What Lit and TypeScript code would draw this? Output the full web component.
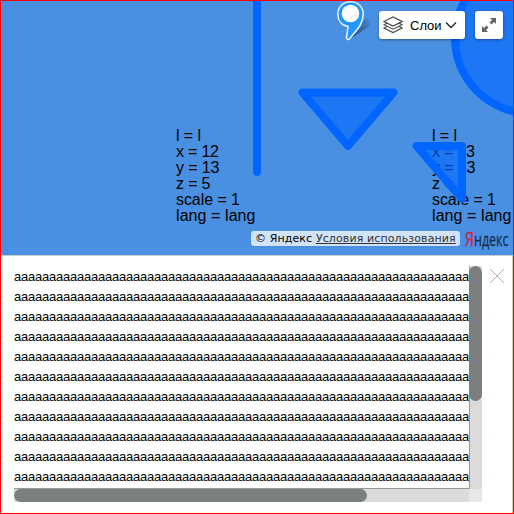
import { LitElement, html, css, svg } from "lit";
import { customElement } from "lit/decorators.js";

const TILES = [
  { left: 176, column: 12 },
  { left: 432, column: 13 },
];

const tileLines = (column: number): [string, number][] => [
  ["l = l", 25],
  [`x = ${column}`, 43],
  ["y = 13", 43.5],
  ["z = 5", 34.5],
  ["scale = 1", 64],
  ["lang = lang", 79.5],
];

@customElement("map-canvas")
class MapCanvas extends LitElement {
  static styles = css`
    :host { display: block; }
    svg { display: block; }
    .tile { font: 16px "Liberation Sans", Arial, sans-serif; fill: #000; }
    .shape { fill: #0066ff; fill-opacity: 0.6; stroke: #0066ff; stroke-width: 8; stroke-linejoin: round; stroke-linecap: round; }
  `;
  render() {
    return html`<svg width="512" height="254" viewBox="1 1 512 254">
      <defs>
        <linearGradient id="shade" x1="0" y1="1" x2="1" y2="0">
          <stop offset="0" stop-color="#17375e" stop-opacity=".8" />
          <stop offset="1" stop-color="#17375e" stop-opacity=".1" />
        </linearGradient>
      </defs>
      ${TILES.map((t) =>
        tileLines(t.column).map(([line, width], i) => svg`<text class="tile" x=${t.left} y=${141 + i * 16} textLength=${width}>${line}</text>`)
      )}
      <path class="shape" d="M257 -10V172" />
      <path class="shape" d="M302.500 92.500H393.500L348 146Z" />
      <path class="shape" d="M416.500 146H462V199Z" />
      <circle class="shape" cx="530" cy="38" r="75" />
      <path d="M350 39L361 20L367 19Q374 23 367 28Z" fill="url(#shade)" />
      <path d="M350.500 1.800C357.700 1.800 363.200 7 363.200 14C363.200 25 355.500 31 349.800 38.600Q347 40.800 346.500 37.500L348 26.500C341.500 25.500 337.800 20.500 337.800 14C337.800 7 343.300 1.800 350.500 1.800Z" fill="#1e98ff" stroke="#e4effb" stroke-width="1.600" />
      <circle cx="350.500" cy="13.500" r="8.800" fill="#fff" />
    </svg>`;
  }
}

@customElement("map-toolbar")
class MapToolbar extends LitElement {
  static styles = css`
    :host { display: flex; gap: 10px; }
    .btn { box-sizing: border-box; height: 28px; background: #fff; border-radius: 3px; display: flex; align-items: center; box-shadow: 0 1px 3px rgba(0, 0, 0, 0.35); font: 13px "Liberation Sans", Arial, sans-serif; color: #000; }
    .layers { width: 86px; padding-left: 4px; }
    .full { width: 28px; justify-content: center; }
    .label { width: 35px; margin: 1px 0 0 7px; }
    svg { display: block; flex: none; }
  `;
  render() {
    return html`<div class="btn layers">
        <svg width="20" height="18" viewBox="0 0 20 18" fill="#fff" stroke="#4d4d4d" stroke-width="1.200">
          <path d="M1 12L10 7.500L19 12L10 16.500Z" />
          <path d="M1 8.700L10 4.200L19 8.700L10 13.200Z" />
          <path d="M1 5.500L10 1L19 5.500L10 10Z" />
        </svg>
        <span class="label">Слои</span>
        <svg width="12" height="8" viewBox="0 0 12 8" fill="none" stroke="#222" stroke-width="1.300"><path d="M1 1.500L6 6.500L11 1.500" /></svg>
      </div>
      <div class="btn full">
        <svg width="16" height="16" viewBox="0 0 16 16" fill="#666">
          <path d="M9 1H15V7L13 5L10.500 7.500L8.500 5.500L11 3Z" />
          <path d="M7 15H1V9L3 11L5.500 8.500L7.500 10.500L5 13Z" />
        </svg>
      </div>`;
  }
}

@customElement("balloon-panel")
class BalloonPanel extends LitElement {
  static styles = css`
    :host { box-sizing: border-box; display: grid; grid-template-columns: 468px 1fr; padding: 10px 8px 11px 13px; background: #fff; border-right: 1px solid #ccc; border-bottom: 1px solid #ccc; border-top: 1px solid #ccc; }
    .scroll { display: grid; grid-template-columns: 455px 13px; grid-template-rows: 223px 13px; }
    .text { box-sizing: border-box; overflow: hidden; padding-top: 1px; border-bottom: 1px solid #999; font: 13px/20px "Liberation Sans", Arial, sans-serif; letter-spacing: -0.23px; color: #000; white-space: nowrap; }
    .v, .h { background: #dbdbdb; }
    .v { border-left: 1px solid #999; }
    .thumb { background: #7b7f7f; border-radius: 7px; }
    .v .thumb { height: 135px; margin-left: -1px; }
    .h .thumb { height: 13px; width: 353px; }
    .corner { background: #e8e8e8; }
    .close { display: block; margin: 3px 0 0 8px; }
  `;
  render() {
    return html`<div class="scroll">
        <div class="text">${Array.from({ length: 11 }, () => html`<div>${"a".repeat(65)}</div>`)}</div>
        <div class="v"><div class="thumb"></div></div>
        <div class="h"><div class="thumb"></div></div>
        <div class="corner"></div>
      </div>
      <svg class="close" width="14" height="14" viewBox="0 0 14 14" fill="none" stroke="#b2b2b2"><path d="M0 0L14 14M14 0L0 14" /></svg>`;
  }
}

@customElement("app-root")
class AppRoot extends LitElement {
  static styles = css`
    :host { box-sizing: border-box; display: flex; flex-direction: column; width: 514px; height: 514px; border: 1px solid #f00; overflow: hidden; background: #fff; }
    .map { position: relative; height: 254px; flex: none; background: #4a90e2; }
    balloon-panel { flex: 1; }
    .tools { position: absolute; top: 10px; right: 10px; }
    .copy { position: absolute; right: 4px; top: 230px; display: flex; align-items: flex-start; gap: 5px; }
    .terms { box-sizing: border-box; width: 209px; height: 15px; padding: 0 4px; border-radius: 3px; background: rgba(255, 255, 255, 0.75); font: 11px/16px "DejaVu Sans", sans-serif; letter-spacing: 0.11px; color: #000; white-space: nowrap; }
    .link { color: #333; text-decoration: underline; }
    .logo { display: block; overflow: visible; }
    .logo text { font-family: "Open Sans", sans-serif; fill: #16304f; stroke: #16304f; stroke-width: 0.3px; }
    .logo .ya { fill: #d7213f; stroke: #d7213f; }
  `;
  render() {
    return html`<div class="map">
        <map-canvas></map-canvas>
        <map-toolbar class="tools"></map-toolbar>
        <div class="copy">
          <div class="terms">© Яндекс <span class="link">Условия использования</span></div>
          <svg class="logo" width="44" height="20" viewBox="0 0 44 20">
            <text class="ya" x="0" y="15" font-size="20.500" textLength="9" lengthAdjust="spacingAndGlyphs">Я</text>
            <text x="9" y="15" font-size="18.500" textLength="34.500" lengthAdjust="spacingAndGlyphs">ндекс</text>
          </svg>
        </div>
      </div>
      <balloon-panel></balloon-panel>`;
  }
}
